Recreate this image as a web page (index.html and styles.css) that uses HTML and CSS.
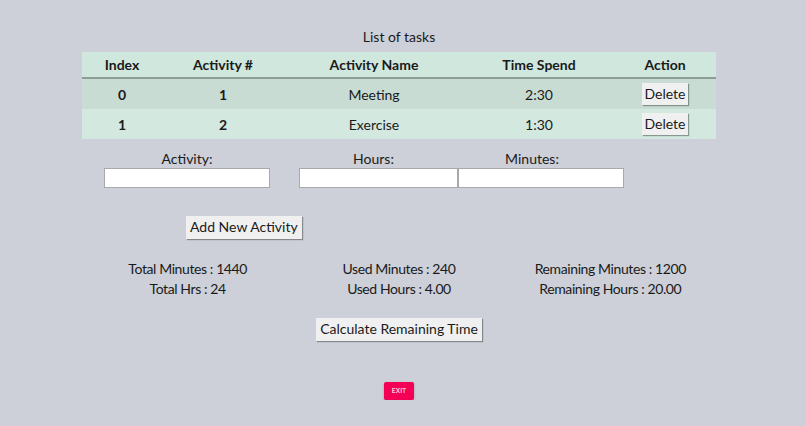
FILE: index.html
```html
<!DOCTYPE html>
<html>
<head>
<meta charset="utf-8">
<link rel="stylesheet" href="styles.css">
</head>
<body>
<div class="page">
  <div class="wrap">
    <div class="title">List of tasks</div>
    <table class="tasks">
      <thead>
        <tr>
          <th class="c1">Index</th>
          <th class="c2">Activity #</th>
          <th class="c3">Activity Name</th>
          <th class="c4">Time Spend</th>
          <th class="c5">Action</th>
        </tr>
      </thead>
      <tbody>
        <tr class="odd">
          <td class="b">0</td>
          <td class="b">1</td>
          <td>Meeting</td>
          <td>2:30</td>
          <td><button class="btn del">Delete</button></td>
        </tr>
        <tr class="even">
          <td class="b">1</td>
          <td class="b">2</td>
          <td>Exercise</td>
          <td>1:30</td>
          <td><button class="btn del">Delete</button></td>
        </tr>
      </tbody>
    </table>

    <div class="form">
      <div class="field f-act">
        <label class="lbl">Activity:</label>
        <input class="inp" type="text">
      </div>
      <div class="field f-hrs">
        <label class="lbl">Hours:</label>
        <input class="inp" type="text">
      </div>
      <div class="field f-min">
        <label class="lbl">Minutes:</label>
        <input class="inp" type="text">
      </div>
    </div>

    <div class="add-row">
      <button class="btn">Add New Activity</button>
    </div>

    <div class="stats">
      <div class="stat">
        <div>Total Minutes : 1440</div>
        <div>Total Hrs : 24</div>
      </div>
      <div class="stat">
        <div>Used Minutes : 240</div>
        <div>Used Hours : 4.00</div>
      </div>
      <div class="stat">
        <div>Remaining Minutes : 1200</div>
        <div>Remaining Hours : 20.00</div>
      </div>
    </div>

    <div class="calc-row">
      <button class="btn">Calculate Remaining Time</button>
    </div>

    <div class="exit-row">
      <button class="exit">Exit</button>
    </div>
  </div>
</div>
</body>
</html>
```

FILE: styles.css
```css
html, body {
  margin: 0;
  padding: 0;
  background: #cdd0d8;
}
body {
  font-family: Lato, "Noto Sans", sans-serif;
  font-size: 14px;
  color: #1a1a1a;
}
.page {
  width: 798px;
  display: flex;
  justify-content: center;
}
.wrap {
  width: 634px;
  display: flex;
  flex-direction: column;
}
.title {
  text-align: center;
  height: 20px;
  line-height: 20px;
  margin-top: 27px;
  margin-bottom: 5px;
}
.tasks {
  width: 634px;
  border-collapse: collapse;
  table-layout: fixed;
}
.tasks th, .tasks td {
  padding: 0;
  text-align: center;
}
.tasks th {
  background: #d0e7de;
  height: 25px;
  font-weight: bold;
  border-bottom: 2px solid #8e9c97;
}
.c1 { width: 80px; }
.c2 { width: 122px; }
.c3 { width: 180px; }
.c4 { width: 150px; }
.c5 { width: 102px; }
.tasks td {
  height: 30px;
}
.tasks .odd td { background: #c8dcd4; }
.tasks .even td { background: #d3e8df; }
.tasks td.b { font-weight: bold; }
.btn {
  font-family: inherit;
  font-size: 14px;
  color: #1a1a1a;
  background: #f0f0f0;
  border: none;
  border-radius: 0;
  box-shadow: 1px 1px 1px rgba(0,0,0,0.35);
  padding: 1px 4px 2px;
  line-height: 20px;
  cursor: pointer;
}
.btn.del {
  padding: 1px 3px;
}
.form {
  display: flex;
  margin-top: 11px;
  padding-left: 22px;
}
.field {
  display: flex;
  flex-direction: column;
}
.lbl {
  text-align: center;
  height: 18px;
  line-height: 18px;
}
.inp {
  box-sizing: border-box;
  height: 20px;
  border: 1px solid #a9a9a9;
  background: #fff;
  margin: 0;
  padding: 0;
}
.f-act .inp { width: 166px; }
.f-hrs { margin-left: 29px; }
.f-hrs .inp { width: 159px; }
.f-hrs .lbl { padding-right: 10px; }
.f-min .inp { width: 166px; }
.f-min .lbl { padding-right: 18px; }
.add-row {
  display: flex;
  padding-left: 104px;
  margin-top: 28px;
}
.stats {
  display: grid;
  grid-template-columns: repeat(3, 1fr);
  margin-top: 20px;
  line-height: 20px;
  text-align: center;
  letter-spacing: -0.4px;
}
.calc-row {
  display: flex;
  justify-content: center;
  margin-top: 19px;
}
.exit-row {
  display: flex;
  justify-content: center;
  margin-top: 41px;
}
.exit {
  background: #f50057;
  color: #fff;
  border: none;
  border-radius: 2px;
  font-family: Roboto, sans-serif;
  font-size: 7px;
  text-transform: uppercase;
  width: 30px;
  height: 18px;
  padding: 0;
  box-shadow: 0 1px 2px rgba(0,0,0,0.3);
}
```
